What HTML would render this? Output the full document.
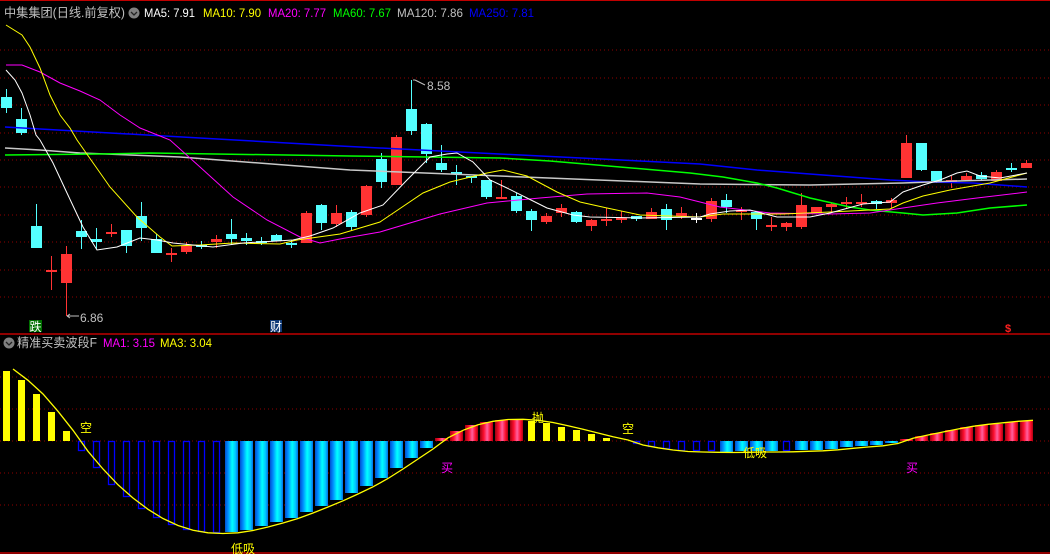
<!DOCTYPE html>
<html><head><meta charset="utf-8"><style>
html,body{margin:0;padding:0;background:#000;width:1050px;height:554px;overflow:hidden}
svg{display:block}
text{font-family:"Liberation Sans","Noto Sans CJK SC",sans-serif}
</style></head><body>
<svg id="s" width="1050" height="554" xmlns="http://www.w3.org/2000/svg">
<defs>
<linearGradient id="cy" x1="0" x2="1" y1="0" y2="0">
<stop offset="0" stop-color="#0050d0"/><stop offset="0.25" stop-color="#0090ff"/><stop offset="0.55" stop-color="#00ffff"/><stop offset="0.8" stop-color="#00c8ff"/><stop offset="1" stop-color="#0070e8"/></linearGradient>
<linearGradient id="rd" x1="0" x2="1" y1="0" y2="0">
<stop offset="0" stop-color="#a00010"/><stop offset="0.3" stop-color="#ff1030"/><stop offset="0.55" stop-color="#ff60a0"/><stop offset="0.8" stop-color="#ff1030"/><stop offset="1" stop-color="#b00010"/></linearGradient>
</defs>
<g id="g"></g>
<line x1="0" y1="0.5" x2="1050" y2="0.5" stroke="#c00000"/>
<line x1="0" y1="334" x2="1050" y2="334" stroke="#c00000" stroke-width="1.5"/>
<line x1="0" y1="553" x2="1050" y2="553" stroke="#c00000" stroke-width="1.5"/>
<text x="4" y="17" font-size="12.5" fill="#c0c0c0" textLength="121" lengthAdjust="spacingAndGlyphs">中集集团(日线.前复权)</text>
<circle cx="134" cy="13" r="5.5" fill="#808080"/><path d="M131 12 l3 3 l3 -3" stroke="#222" fill="none" stroke-width="1.3"/>
<text x="144" y="17" font-size="12" fill="#fff" textLength="51" lengthAdjust="spacingAndGlyphs">MA5: 7.91</text>
<text x="203" y="17" font-size="12" fill="#ffff00" textLength="58" lengthAdjust="spacingAndGlyphs">MA10: 7.90</text>
<text x="268" y="17" font-size="12" fill="#ff00ff" textLength="58" lengthAdjust="spacingAndGlyphs">MA20: 7.77</text>
<text x="333" y="17" font-size="12" fill="#00ff00" textLength="58" lengthAdjust="spacingAndGlyphs">MA60: 7.67</text>
<text x="397" y="17" font-size="12" fill="#c0c0c0" textLength="66" lengthAdjust="spacingAndGlyphs">MA120: 7.86</text>
<text x="469" y="17" font-size="12" fill="#0000ff" textLength="65" lengthAdjust="spacingAndGlyphs">MA250: 7.81</text>
<circle cx="9" cy="343" r="5.5" fill="#808080"/><path d="M6 342 l3 3 l3 -3" stroke="#222" fill="none" stroke-width="1.3"/>
<text x="17" y="347" font-size="12.5" fill="#c0c0c0" textLength="80" lengthAdjust="spacingAndGlyphs">精准买卖波段F</text>
<text x="103" y="347" font-size="12" fill="#ff00ff" textLength="52" lengthAdjust="spacingAndGlyphs">MA1: 3.15</text>
<text x="160" y="347" font-size="12" fill="#ffff00" textLength="52" lengthAdjust="spacingAndGlyphs">MA3: 3.04</text>
<path d="M413 80 h2 M415 80 l10 5" stroke="#c0c0c0" fill="none"/>
<text x="427" y="90" font-size="12" fill="#c0c0c0">8.58</text>
<path d="M67 316 l3 -2 M67 316 l3 2 M67 316 h12" stroke="#c0c0c0" fill="none"/>
<text x="80" y="322" font-size="12" fill="#c0c0c0">6.86</text>
<rect x="29" y="320" width="13" height="12" fill="#007000"/><text x="29.5" y="331" font-size="12" fill="#fff">跌</text>
<rect x="270" y="320" width="12" height="12" fill="#103a78"/><text x="270" y="331" font-size="12" fill="#fff">财</text>
<text x="1005" y="332" font-size="11" font-weight="bold" fill="#ff2020">$</text>
<text x="80" y="432" font-size="12" fill="#ffff00">空</text>
<text x="622" y="433" font-size="12" fill="#ffff00">空</text>
<text x="532" y="422" font-size="12" fill="#ffff00">抛</text>
<text x="441" y="472" font-size="12" fill="#ff00ff">买</text>
<text x="906" y="472" font-size="12" fill="#ff00ff">买</text>
<text x="231" y="553" font-size="12" fill="#ffff00">低吸</text>
<text x="743" y="457" font-size="12" fill="#ffff00">低吸</text>
</svg>
<script>
var g=document.getElementById('g'),h='';
function X(i){return 6+15*i;}
[50,78,105,133,160,187,215,242,270,297,377,409,441,473,505].forEach(function(y){
 h+='<line x1="0" y1="'+y+'" x2="1050" y2="'+y+'" stroke="#900000" stroke-dasharray="1,3"/>';});
var C=[['c',97,108,89,113],['c',119,133,108,135],['c',226,248,204,248],['r',270,270,256,290],['r',254,283,246,316],
['c',231,237,220,249],['c',239,242,228,249],['r',232,232,224,237],['c',230,246,230,253],['c',216,228,202,241],
['c',239,253,234,253],['r',253,255,248,262],['r',246,252,242,254],['c',245,247,241,249],['r',239,242,235,248],
['c',234,239,219,245],['c',238,241,233,245],['c',241,242,237,245],['c',235,241,234,241],['c',243,245,240,248],
['r',213,243,211,243],['c',205,223,204,230],['r',213,224,205,227],['c',212,227,210,230],['r',186,215,185,217],
['c',159,182,153,188],['r',137,185,135,185],['c',109,131,80,135],['c',124,154,123,163],['c',163,170,145,172],
['c',172,174,165,185],['c',176,178,176,183],['c',180,197,180,199],['r',197,198,180,198],['c',196,211,193,213],
['c',211,220,209,231],['r',216,222,213,224],['r',208,213,204,217],['c',212,222,211,223],['r',220,226,219,231],
['r',219,220,208,226],['r',218,219,211,223],['c',216,219,216,221],['r',212,219,208,219],['c',209,220,204,230],
['r',213,216,207,219],['w',218,218,213,223],['r',201,219,198,222],['c',200,207,194,213],['r',210,210,207,220],
['c',212,219,212,230],['r',225,225,217,231],['r',223,227,222,231],['r',205,227,193,229],['r',207,213,207,213],
['r',204,207,203,212],['r',202,204,197,209],['r',202,204,194,207],['c',201,204,200,209],['r',200,203,198,208],
['r',143,178,135,178],['c',143,170,143,171],['c',171,181,171,183],['r',180,182,176,188],['r',176,180,173,180],
['c',175,179,172,181],['r',172,181,170,181],['c',168,168,163,172],['r',163,168,160,168]];
C.forEach(function(d,i){var x=X(i),col=d[0]=='c'?'#54ffff':d[0]=='r'?'#ff3333':'#ffffff';
 var t=Math.min(d[1],d[2]),b=Math.max(d[1],d[2]);
 h+='<line x1="'+(x+.5)+'" y1="'+d[3]+'" x2="'+(x+.5)+'" y2="'+d[4]+'" stroke="'+col+'"/>';
 if(b-t<2){h+='<rect x="'+(x-5)+'" y="'+t+'" width="11" height="2" fill="'+col+'"/>';}
 else h+='<rect x="'+(x-5)+'" y="'+t+'" width="11" height="'+(b-t)+'" fill="'+col+'"/>';});
function pl(p,c,w){h+='<polyline fill="none" stroke="'+c+'" stroke-width="'+(w||1)+'" points="'+p+'"/>';}
pl('5,127 340,146 700,164 757,170 823,175 890,180 930,182 973,183 1027,187','#0000ff',1.5);
pl('5,148 40,150 80,153 180,157 350,170 700,184 810,185 903,183 957,181 1027,179','#c8c8c8',1.5);
pl('5,155 100,154 150,153 350,156 500,158 550,161 690,173 723,177 757,183 777,188 810,198 850,207 870,210 903,213 923,215 957,213 990,208 1027,205','#00ff00',1.5);
pl('6,65 22,65 40,72 60,83 80,91 100,100 120,115 140,128 160,136 170,140 200,167 233,197 267,220 300,237 320,243 340,239 380,232 440,214 487,203 540,198 587,194 647,193 680,197 700,202 720,207 770,213 830,214 870,213 903,208 937,203 977,198 1027,192','#ff00ff');
pl('6,25 22,35 30,47 40,68 50,95 60,115 70,128 77,140 110,187 137,217 160,237 172,246 200,245 233,243 280,244 297,240 340,234 380,222 423,193 450,182 487,173 503,170 527,176 557,192 580,202 607,208 640,215 700,217 723,214 783,214 830,212 870,210 890,209 903,203 923,196 950,190 990,183 1027,173','#ffff00');
pl('6,70 15,80 22,93 30,115 36,135 40,140 53,163 67,193 83,227 97,250 117,247 140,238 157,240 173,243 213,247 243,243 293,240 310,236 333,228 360,213 383,205 407,180 430,157 447,154 457,153 473,162 490,180 507,188 527,198 547,208 573,215 590,217 640,218 700,217 710,214 730,211 750,210 777,217 810,217 830,213 863,204 890,202 903,192 923,185 940,180 957,173 967,171 980,176 1000,178 1027,173','#ffffff');
var B=[371,380,394,412,431,451,468,485,497,509,518,525,530,532,533,532,530,526,522,518,512,506,500,493,486,478,468,458,448,
438,431,425,422,420,420,421,423,427,430,434,438,441,444,447,449,451,451,451,452,451,451,451,451,450,450,449,447,446,445,443,
439,436,433,430,427,425,424,422,421];
var T=['y','y','y','y','y','b','b','b','b','b','b','b','b','b','b','c','c','c','c','c','c','c','c','c','c','c','c','c','c',
'r','r','r','r','r','r','y','y','y','y','y','y','n','b','b','b','b','b','b','c','c','c','c','b','c','c','c','c','c','c','c',
'r','r','r','r','r','r','r','r','r'];
var Z=441;
B.forEach(function(v,i){var x=X(i),t=T[i],top=Math.min(v,Z),ht=Math.abs(v-Z);
 if(t=='y')h+='<rect x="'+(x-3)+'" y="'+top+'" width="7" height="'+ht+'" fill="#ffff00"/>';
 else if(t=='b')h+='<rect x="'+(x-2.5)+'" y="'+(top+.5)+'" width="6" height="'+Math.max(ht-1,1)+'" fill="none" stroke="#0000ff" stroke-width="1.3"/>';
 else if(t=='c')h+='<rect x="'+(x-6)+'" y="'+top+'" width="13" height="'+ht+'" fill="url(#cy)"/>';
 else if(t=='r')h+='<rect x="'+(x-6)+'" y="'+top+'" width="13" height="'+ht+'" fill="url(#rd)"/>';
});
var P=[];for(var i=0;i<B.length;i++){var a=B[Math.max(0,i-1)],b=B[i],c=B[Math.min(B.length-1,i+1)];
 var v=i==0?B[0]-2:(a+b*2+c)/4+(B[i]>Z?1:-1);P.push((X(i)+7)+','+v.toFixed(1));}
pl(P.join(' '),'#ffff00',1.3);
g.innerHTML=h;
</script>
</body></html>
